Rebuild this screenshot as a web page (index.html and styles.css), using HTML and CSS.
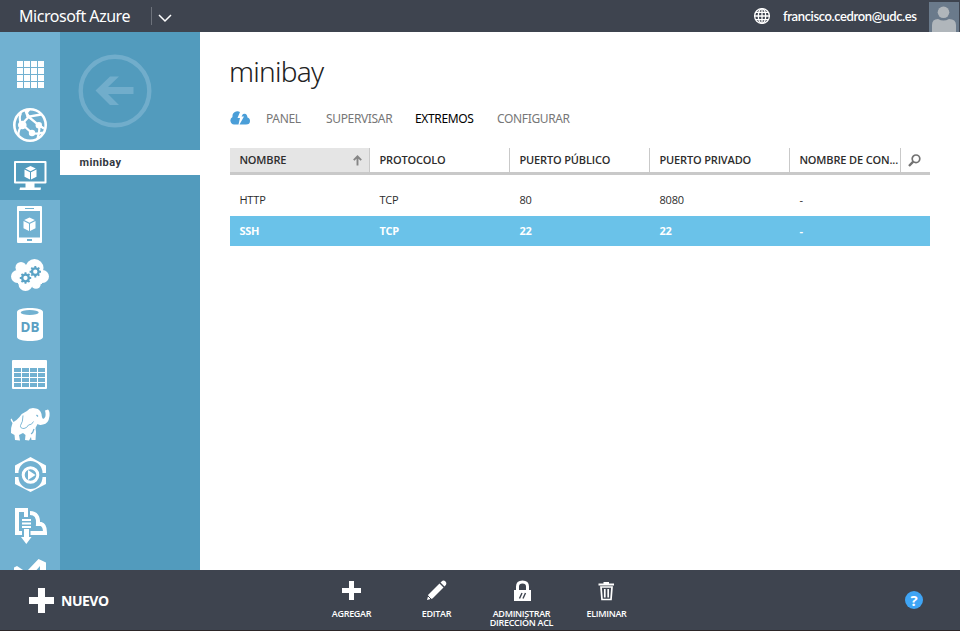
FILE: index.html
```html
<!DOCTYPE html>
<html lang="es">
<head>
<meta charset="utf-8">
<title>Microsoft Azure</title>
<link rel="stylesheet" href="styles.css">
</head>
<body>
<svg width="0" height="0" class="defs">
  <defs>
    <g id="cube"><path d="M0-7 5.3-4.4 0-1.7-5.3-4.4Z"/><path d="M-6-3.4-.5-.7V6.500L-6 3.700Z"/><path d="M6-3.400.5-.7V6.500L6 3.700Z"/></g>
    <g id="gear"><circle r="3.300" fill="none" stroke-width="2.300"/><path d="M0-5.700V-3.500M0 3.500V5.700M-5.700 0H-3.500M3.500 0H5.700M-4-4-2.500-2.500M2.500 2.500 4 4M-4 4-2.500 2.500M2.500-2.500 4-4" stroke-width="1.900"/></g>
  </defs>
</svg>
<div class="app">
  <header class="topbar">
    <span class="brand">Microsoft Azure</span>
    <span class="divider"></span>
    <svg class="chevron" width="14" height="9" viewBox="0 0 14 9"><path d="M1 1 7 7 13 1" fill="none" stroke="#fff" stroke-width="1.500"/></svg>
    <svg class="world" width="18" height="18" viewBox="0 0 18 18" fill="none" stroke="#fff" stroke-width="1.300"><circle cx="9" cy="9" r="7.400"/><ellipse cx="9" cy="9" rx="3.700" ry="7.400"/><path d="M9 1.500V16.500M1.500 9H16.500M2.600 5.300H15.400M2.600 12.700H15.400"/></svg>
    <span class="email">francisco.cedron@udc.es</span>
    <svg class="avatar" width="30" height="30" viewBox="0 0 30 30"><path fill="#6a7a8b" d="M0 0H30V30H0Z"/><circle cx="14.500" cy="10.300" r="5.800" fill="#b0b6bb"/><path fill="#b0b6bb" d="M3 30V23Q3 17 9 17Q14.500 20 20 17Q27 17 27 23V30Z"/></svg>
  </header>
  <div class="middle">
    <nav class="rail">
      <a class="item"><svg viewBox="0 0 60 50"><path d="M17 11h6v6h-6zM24 11h6v6h-6zM31 11h6v6h-6zM38 11h6v6h-6zM17 18h6v6h-6zM24 18h6v6h-6zM31 18h6v6h-6zM38 18h6v6h-6zM17 25h6v6h-6zM24 25h6v6h-6zM31 25h6v6h-6zM38 25h6v6h-6zM17 32h6v6h-6zM24 32h6v6h-6zM31 32h6v6h-6zM38 32h6v6h-6z"/></svg></a>
      <a class="item"><svg viewBox="0 0 60 50"><circle cx="30" cy="25" r="15.700" fill="none" stroke="#fff" stroke-width="2.600"/><circle cx="22.300" cy="25" r="4.300"/><circle cx="38.800" cy="25.300" r="3.200"/><circle cx="32" cy="33" r="3.200"/><path d="M22 24 29 16.500 41 14.500M24 26 32 33Q37 34.500 43 32.500M27 15.500 39 25.300 44 28.500" fill="none" stroke="#fff" stroke-width="2.300"/><path d="M39 26Q40 31 37.500 38M21 24Q18.500 18 21 13M22 26Q18 30 18.500 35" fill="none" stroke="#fff" stroke-width="2.200"/><path d="M24 10 31 9 28 13 30 16 27 18Z"/></svg></a>
      <a class="item active"><svg viewBox="0 0 60 50"><path fill-rule="evenodd" d="M15 11H45.500Q46.500 11 46.500 12V32.500Q46.500 33.500 45.500 33.500H15Q14 33.500 14 32.500V12Q14 11 15 11ZM16 13V31.500H44.500V13Z"/><path d="M25.500 33H34.500V37.500H41L40.500 40H19.500L20 37.500H25.500Z"/><use href="#cube" x="30.500" y="23"/></svg></a>
      <a class="item"><svg viewBox="0 0 60 50"><path fill-rule="evenodd" d="M18 6H41Q42 6 42 7V42Q42 43 41 43H18Q17 43 17 42V7Q17 6 18 6ZM19 11V37.500H40V11ZM25 8V9H34V8ZM27 39V41H32V39Z"/><use href="#cube" x="29.500" y="24.500"/></svg></a>
      <a class="item"><svg viewBox="0 0 60 50"><circle cx="17.500" cy="26.500" r="6.500"/><circle cx="21" cy="17.500" r="5.500"/><circle cx="34.500" cy="18" r="9"/><circle cx="42.500" cy="26.500" r="6.500"/><circle cx="25.500" cy="34" r="7"/><circle cx="36" cy="34" r="4.800"/><path d="M18 17H42V34H18Z"/><g stroke="#5ba3c6"><use href="#gear" x="25.500" y="28"/><use href="#gear" x="35.300" y="21.700"/></g></svg></a>
      <a class="item"><svg viewBox="0 0 60 50"><path d="M17 12C17 6.700 43 6.700 43 12V37C43 42.300 17 42.300 17 37Z"/><ellipse cx="29.700" cy="12.500" rx="9" ry="2.600" fill="#71b1d1"/><text class="db" x="30" y="32" text-anchor="middle">DB</text></svg></a>
      <a class="item"><svg viewBox="0 0 60 50"><rect x="12" y="10" width="35" height="29" rx="1"/><path fill="#71b1d1" d="M14 18h7v4h-7zM22 18h7v4h-7zM30 18h7v4h-7zM38 18h7v4h-7zM14 23h7v4h-7zM22 23h7v4h-7zM30 23h7v4h-7zM38 23h7v4h-7zM14 28h7v4h-7zM22 28h7v4h-7zM30 28h7v4h-7zM38 28h7v4h-7zM14 33h7v4h-7zM22 33h7v4h-7zM30 33h7v4h-7zM38 33h7v4h-7z"/></svg></a>
      <a class="item"><svg viewBox="0 0 60 50"><path d="M12.500 23Q9.500 19 11.500 18.500L13.500 22Q17 20 19.500 17Q22 13 27 11Q30 7 36 8.500Q40 9 41.500 14Q42 20 44 18.500Q46 17 45.500 13L45 10.500L48 9.500Q50 11 49.500 16Q48.500 24 43 24.500Q40 25.500 37.500 24L35.500 28L36 32L35.500 40H31.500L31 37L29 40.500L25 40L25.500 35L23 33L19 35L20 40.500L15 40L14.500 35L11 33Q10.500 28 12.500 23Z"/><path d="M23 15.500Q23 22 20.500 25.500Q20 28.500 24 28.500Q27 28 28.500 25Q32 25 33.500 21.500" fill="none" stroke="#71b1d1" stroke-width=".9"/><path d="M36.500 15 38 16.500M34 29Q33 33 31 34" fill="none" stroke="#71b1d1" stroke-width="1.200"/></svg></a>
      <a class="item"><svg viewBox="0 0 60 50"><path d="M15 23V15.500L30.500 7 46 15.500V23H42.500A12 12 0 0 0 18.500 23ZM15 27V34L30.500 42 46 34V27H42.500A12 12 0 0 1 18.500 27Z"/><circle cx="30.500" cy="25" r="7.300" fill="none" stroke="#fff" stroke-width="3"/><path d="M28 20 35.500 25 28 30Z"/></svg></a>
      <a class="item"><svg viewBox="0 0 60 50"><path d="M15 8H28V17H24V12H19V31H22V35H15ZM22 19H31V21H22ZM22 22.500H31V24.500H22ZM22 26H31V28H22ZM24 29H29V37H31.500L26.300 44 21 37H24Z"/><path d="M30 13C36 13 38.500 17 38 24H41Q45 25 45 32.500V33H30.500" fill="none" stroke="#fff" stroke-width="4"/></svg></a>
      <a class="item"><svg viewBox="0 0 60 50"><path d="M14 17.500 17 16 23 20 28 20 38.500 9 46 12.500V50H40V16L33 24H14Z"/></svg></a>
    </nav>
    <aside class="side">
      <svg class="back" width="74" height="74" viewBox="0 0 74 74"><circle cx="37" cy="37" r="34.300" fill="none" stroke="#71adcb" stroke-width="4.400"/><path fill="#71adcb" d="M17.500 36.500 32 22.500H41L30 33H55.500V40H30L41 51H32Z"/></svg>
      <a class="selected">minibay</a>
    </aside>
    <main class="content">
      <h1>minibay</h1>
      <div class="tabs">
        <svg class="cloud" width="20" height="14" viewBox="0 0 20 14"><path fill="#4a9ed8" d="M4 13.500A4 4 0 0 1 2.500 6Q2 2 6 .5Q8-.3 10 1L7.500 7H10L8.500 13.500ZM9.500 13.500 14 5.500H11.500L13 3Q17 1.500 17.500 6.500Q20 7 20 10Q20 13.500 16 13.500Z"/></svg>
        <a class="t1">PANEL</a><a class="t2">SUPERVISAR</a><a class="t3 on">EXTREMOS</a><a class="t4">CONFIGURAR</a>
      </div>
      <div class="grid head">
        <span class="sorted">NOMBRE<svg width="9" height="11" viewBox="0 0 9 11"><path d="M4.500 10.500V2M.8 5.200 4.500 1.400 8.200 5.200" fill="none" stroke="#858585" stroke-width="1.900"/></svg></span><span>PROTOCOLO</span><span>PUERTO PÚBLICO</span><span>PUERTO PRIVADO</span><span>NOMBRE DE CON...</span>
        <span class="search"><svg width="13" height="13" viewBox="0 0 13 13" fill="none" stroke="#727272"><circle cx="8" cy="4.800" r="3.800" stroke-width="1.700"/><path d="M5.200 7.600 1 12" stroke-width="2.300"/></svg></span>
      </div>
      <div class="grid row"><span>HTTP</span><span>TCP</span><span>80</span><span>8080</span><span>-</span></div>
      <div class="grid row chosen"><span>SSH</span><span>TCP</span><span>22</span><span>22</span><span>-</span></div>
    </main>
  </div>
  <footer class="bar">
    <a class="new"><svg width="25" height="25" viewBox="0 0 25 25"><path fill="#fff" d="M9 0H16V9H25V16H16V25H9V16H0V9H9Z"/></svg><span>NUEVO</span></a>
    <div class="actions">
      <a><svg viewBox="0 0 24 24"><path d="M9 3H14V10H21V15H14V22H9V15H2V10H9Z"/></svg><span>AGREGAR</span></a>
      <a><svg viewBox="0 0 24 24"><path d="M2 22 3.500 16.500 14.500 5.500 18.500 9.500 7.500 20.500Z"/><path d="M15.500 4.500 17.500 2.800Q19 2 20.500 3.500Q22 5 21 6.700L19.500 8.500Z"/><path d="M3 18 6 21" stroke="#3e444f" stroke-width="1"/></svg><span>EDITAR</span></a>
      <a><svg viewBox="0 0 24 24"><path d="M4 12H21V23H4Z"/><path d="M7.500 13V8.500Q7.500 4 12.500 4Q17.500 4 17.500 8.500V13" fill="none" stroke="#fff" stroke-width="3"/><path d="M9.500 20.500 12 15M13 20.500 15.500 15" stroke="#3e444f" stroke-width="1.400"/></svg><span>ADMINISTRAR<br>DIRECCIÓN ACL</span></a>
      <a><svg viewBox="0 0 24 24"><path d="M3.500 5.500H19V7.500H3.500ZM8.500 4H14V6H8.500Z"/><path d="M6 9H17L16 21.500H7ZM9.800 11V19.500M13.200 11V19.500" fill="none" stroke="#fff" stroke-width="1.700"/></svg><span>ELIMINAR</span></a>
    </div>
    <a class="help">?</a>
  </footer>
</div>
</body>
</html>
```

FILE: styles.css
```css
* { box-sizing: border-box; }
body { margin: 0; font-family: "Open Sans", "Noto Sans", sans-serif; background: #fff; }
.defs { position: absolute; }
.app { width: 960px; height: 631px; display: flex; flex-direction: column; overflow: hidden; }
.app span, .app a { white-space: nowrap; }

.topbar { height: 32px; flex: none; background: #3e444f; color: #fff; display: flex; align-items: center; }
.brand { width: 132px; margin-left: 19px; font-family: "Noto Sans", sans-serif; font-size: 16px; letter-spacing: -.47px; line-height: 32px; }
.divider { width: 1px; height: 18px; background: #6d727b; }
.chevron { margin: 4px 0 0 6px; }
.world { margin-left: auto; }
.email { width: 134px; margin-left: 12px; font-family: Lato, sans-serif; font-size: 13px; font-weight: 600; line-height: 33px; letter-spacing: -.36px; }
.avatar { margin: 1px 1px 0 12px; }

.middle { height: 538px; flex: none; display: flex; overflow: hidden; }
.rail { width: 60px; flex: none; background: #71b1d1; padding-top: 18px; }
.item { display: block; height: 50px; }
.item svg { display: block; width: 60px; height: 50px; fill: #fff; }
.item.active { background: #529bbd; }
.db { font: 700 13.5px "Noto Sans", sans-serif; fill: #5ba0c3; }
.side { width: 140px; flex: none; background: #529bbd; padding-top: 22px; }
.back { display: block; margin-left: 18px; }
.selected { display: block; height: 25px; margin-top: 22px; padding-left: 19.5px; background: #fff; color: #33373f; font: 700 11px/26px Roboto, sans-serif; letter-spacing: .4px; }

.content { width: 700px; margin-left: 30px; }
h1 { margin: 20px 0 0 -1px; height: 40px; font-family: "Noto Sans", "Open Sans", sans-serif; font-size: 28px; line-height: 38px; font-weight: 300; color: #222; letter-spacing: -.75px; }
.tabs { height: 24px; margin-top: 14px; display: flex; align-items: center; font-family: "Noto Sans", sans-serif; font-size: 12px; color: #777; letter-spacing: -.35px; }
.cloud { margin-right: 16px; }
.t1 { width: 60px; }
.t2 { width: 89px; }
.t3 { width: 82px; }
.on { color: #000; }
.grid { display: grid; grid-template-columns: repeat(4, 140px) 111px 29px; font-size: 11px; }
.grid > span { padding-left: 9.4px; }
.head { height: 27px; margin-top: 18px; border-bottom: 3px solid #c9c9c9; line-height: 24px; font-weight: 600; color: #2d2d2d; letter-spacing: -.15px; }
.head > span { border-right: 1px solid #c9c9c9; height: 24px; }
.head .sorted { background: #e5e5e5; display: flex; justify-content: space-between; align-items: center; padding-right: 7px; }
.head .search { border: 0; padding: 6px 0 0 7px; line-height: 0; }
.row { height: 30px; line-height: 30px; color: #2d2d2d; letter-spacing: -.15px; }
.head + .row { height: 31px; margin-top: 10px; }
.chosen { background: #6ac2e9; color: #fff; font-weight: 700; letter-spacing: -.3px; }

.bar { height: 61px; flex: none; display: flex; align-items: flex-start; background: #3e444f; border-bottom: 1px solid #2c2628; color: #fff; }
.new { display: flex; align-items: center; gap: 7px; width: 309px; height: 60px; padding: 1px 0 0 29px; font-weight: 700; font-size: 14px; letter-spacing: -.5px; }
.actions { display: flex; width: 340px; padding-top: 8px; }
.actions a { width: 85px; display: flex; flex-direction: column; align-items: center; font-size: 9px; font-weight: 600; text-align: center; line-height: 9px; letter-spacing: -.3px; }
.actions svg { width: 24px; height: 24px; fill: #fff; }
.actions span { margin-top: 7px; }
.help { width: 18px; height: 18px; margin: 21px 0 0 256px; border-radius: 50%; background: #3fa5f5; font-size: 15px; font-weight: 700; line-height: 18px; text-align: center; }
```
